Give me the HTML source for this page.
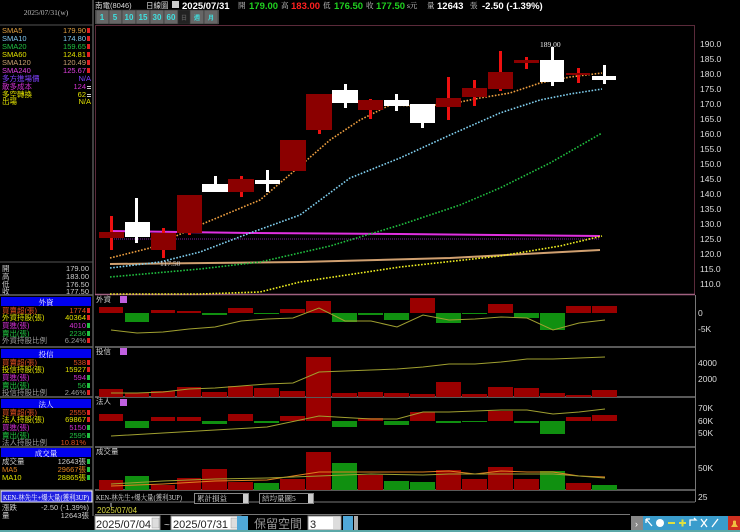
<!DOCTYPE html>
<html><head><meta charset="utf-8"><style>
html,body{margin:0;padding:0;background:#000;width:740px;height:532px;overflow:hidden}
svg{display:block}
text{font-family:"Liberation Sans","Noto Sans CJK TC",sans-serif}
.s{font-family:"Liberation Serif","Noto Serif CJK SC",serif;font-size:7.5px}
.ax{font-family:"DejaVu Sans","Liberation Sans",sans-serif;font-size:8.5px;fill:#ddd}
</style></head><body>
<svg width="740" height="532" viewBox="0 0 740 532" xmlns="http://www.w3.org/2000/svg">
<rect width="740" height="532" fill="#000"/>
<!-- left panel -->
<line x1="93" y1="0" x2="93" y2="516" stroke="#555" stroke-width="1.5"/>
<line x1="0" y1="25" x2="93" y2="25" stroke="#555"/>
<text class="s" x="46" y="15" fill="#bbb" text-anchor="middle">2025/07/31(w)</text>
<g class="s">
<text x="2" y="33" fill="#e0a040">SMA5</text><text x="86" y="33" fill="#e0a040" text-anchor="end">179.90</text>
<text x="2" y="41" fill="#80c8f0">SMA10</text><text x="86" y="41" fill="#80c8f0" text-anchor="end">174.80</text>
<text x="2" y="49" fill="#20c040">SMA20</text><text x="86" y="49" fill="#20c040" text-anchor="end">159.65</text>
<text x="2" y="57" fill="#e0e000">SMA60</text><text x="86" y="57" fill="#e0e000" text-anchor="end">124.81</text>
<text x="2" y="65" fill="#c8a070">SMA120</text><text x="86" y="65" fill="#c8a070" text-anchor="end">120.49</text>
<text x="2" y="73" fill="#e040e0">SMA240</text><text x="86" y="73" fill="#e040e0" text-anchor="end">125.67</text>
<text x="2" y="81" fill="#8040ff">多方進場價</text><text x="91" y="81" fill="#8040ff" text-anchor="end">N/A</text>
<text x="2" y="89" fill="#d030d0">散多成本</text><text x="86" y="89" fill="#d030d0" text-anchor="end">124</text>
<text x="2" y="97" fill="#e0e000">多空轉換</text><text x="86" y="97" fill="#e0e000" text-anchor="end">62</text>
<text x="2" y="104" fill="#e0e000">出場</text><text x="91" y="104" fill="#e0e000" text-anchor="end">N/A</text>
</g>
<g fill="#e02020"><rect x="87" y="28" width="3" height="5"/><rect x="87" y="36" width="3" height="5"/><rect x="87" y="44" width="3" height="5"/><rect x="87" y="52" width="3" height="5"/><rect x="87" y="60" width="3" height="5"/><rect x="87" y="68" width="3" height="5"/></g>
<g fill="#ccc"><rect x="87" y="86" width="4" height="1"/><rect x="87" y="88" width="4" height="1"/><rect x="87" y="94" width="4" height="1"/><rect x="87" y="96" width="4" height="1"/></g>
<line x1="0" y1="262" x2="93" y2="262" stroke="#555"/>
<g class="s" fill="#ccc">
<text x="2" y="271">開</text><text x="89" y="271" text-anchor="end">179.00</text>
<text x="2" y="279">高</text><text x="89" y="279" text-anchor="end">183.00</text>
<text x="2" y="287">低</text><text x="89" y="287" text-anchor="end">176.50</text>
<text x="2" y="294">收</text><text x="89" y="294" text-anchor="end">177.50</text>
</g>
<line x1="0" y1="295" x2="93" y2="295" stroke="#666" stroke-width="1.5"/>
<rect x="1" y="297" width="90" height="9" fill="#0000ee"/><text class="s" x="46" y="305" fill="#fff" text-anchor="middle">外資</text>
<g class="s">
<text x="2" y="313" fill="#e05020">買賣超(張)</text><text x="86" y="313" fill="#e05020" text-anchor="end">1774</text>
<text x="2" y="320" fill="#e0e000">外資持股(張)</text><text x="86" y="320" fill="#e0e000" text-anchor="end">40364</text>
<text x="2" y="328" fill="#d030d0">買進(張)</text><text x="86" y="328" fill="#d030d0" text-anchor="end">4010</text>
<text x="2" y="336" fill="#20c040">賣出(張)</text><text x="86" y="336" fill="#20c040" text-anchor="end">2236</text>
<text x="2" y="343" fill="#999">外資持股比例</text><text x="86" y="343" fill="#999" text-anchor="end">6.24%</text>
</g>
<line x1="0" y1="347" x2="93" y2="347" stroke="#666" stroke-width="1.5"/>
<rect x="1" y="349" width="90" height="9" fill="#0000ee"/><text class="s" x="46" y="357" fill="#fff" text-anchor="middle">投信</text>
<g class="s">
<text x="2" y="365" fill="#e05020">買賣超(張)</text><text x="86" y="365" fill="#e05020" text-anchor="end">538</text>
<text x="2" y="372" fill="#e0e000">投信持股(張)</text><text x="86" y="372" fill="#e0e000" text-anchor="end">15927</text>
<text x="2" y="380" fill="#d030d0">買進(張)</text><text x="86" y="380" fill="#d030d0" text-anchor="end">594</text>
<text x="2" y="388" fill="#20c040">賣出(張)</text><text x="86" y="388" fill="#20c040" text-anchor="end">56</text>
<text x="2" y="395" fill="#999">投信持股比例</text><text x="86" y="395" fill="#999" text-anchor="end">2.46%</text>
</g>
<line x1="0" y1="397" x2="93" y2="397" stroke="#666" stroke-width="1.5"/>
<rect x="1" y="399" width="90" height="9" fill="#0000ee"/><text class="s" x="46" y="407" fill="#fff" text-anchor="middle">法人</text>
<g class="s">
<text x="2" y="415" fill="#e05020">買賣超(張)</text><text x="86" y="415" fill="#e05020" text-anchor="end">2555</text>
<text x="2" y="422" fill="#e0e000">法人持股(張)</text><text x="86" y="422" fill="#e0e000" text-anchor="end">69867</text>
<text x="2" y="430" fill="#d030d0">買進(張)</text><text x="86" y="430" fill="#d030d0" text-anchor="end">5150</text>
<text x="2" y="438" fill="#20c040">賣出(張)</text><text x="86" y="438" fill="#20c040" text-anchor="end">2595</text>
<text x="2" y="445" fill="#999">法人持股比例</text><text x="86" y="445" fill="#e05020" text-anchor="end">10.81%</text>
</g>
<line x1="0" y1="447" x2="93" y2="447" stroke="#666" stroke-width="1.5"/>
<rect x="1" y="448" width="90" height="9" fill="#0000ee"/><text class="s" x="46" y="456" fill="#fff" text-anchor="middle">成交量</text>
<g class="s">
<text x="2" y="464" fill="#ccc">成交量</text><text x="86" y="464" fill="#ccc" text-anchor="end">12643張</text>
<text x="2" y="472" fill="#e08020">MA5</text><text x="86" y="472" fill="#e08020" text-anchor="end">29667張</text>
<text x="2" y="480" fill="#e0e000">MA10</text><text x="86" y="480" fill="#e0e000" text-anchor="end">28865張</text>
</g>
<g fill="#20c040"><rect x="87" y="459" width="3" height="5"/><rect x="87" y="467" width="3" height="5"/><rect x="87" y="475" width="3" height="5"/></g>
<g fill="#e02020"><rect x="87" y="308" width="3" height="5"/><rect x="87" y="315" width="3" height="5"/><rect x="87" y="338" width="3" height="5"/><rect x="87" y="360" width="3" height="5"/><rect x="87" y="367" width="3" height="5"/><rect x="87" y="390" width="3" height="5"/><rect x="87" y="410" width="3" height="5"/><rect x="87" y="417" width="3" height="5"/></g>
<g fill="#20c040"><rect x="87" y="323" width="3" height="5"/><rect x="87" y="331" width="3" height="5"/><rect x="87" y="375" width="3" height="5"/><rect x="87" y="383" width="3" height="5"/><rect x="87" y="425" width="3" height="5"/><rect x="87" y="433" width="3" height="5"/></g>
<line x1="0" y1="490" x2="93" y2="490" stroke="#666" stroke-width="1.5"/>
<rect x="1" y="491" width="91" height="11" fill="#2020e0" stroke="#fff" stroke-width="1"/><text class="s" x="3" y="500" fill="#fff" textLength="86" lengthAdjust="spacingAndGlyphs">KEN-林先生+爆大量(獲利3UP)</text>
<g class="s" fill="#ccc">
<text x="2" y="510">漲跌</text><text x="89" y="510" text-anchor="end">-2.50 (-1.39%)</text>
<text x="2" y="518">量</text><text x="89" y="518" text-anchor="end">12643張</text>
</g>

<!-- top header -->
<g class="s" font-size="8.5">
<text x="95" y="8" fill="#ddd">南電(8046)</text>
<text x="146" y="8" fill="#ddd">日線圖</text>
<rect x="172" y="1" width="7" height="7" fill="#ccc"/>
</g>
<text x="182" y="9" fill="#fff" font-size="9.5" font-weight="bold">2025/07/31</text>
<text class="s" x="238" y="8" fill="#ccc">開</text><text x="249" y="9" fill="#20d020" font-size="9.5" font-weight="bold">179.00</text>
<text class="s" x="281" y="8" fill="#ccc">高</text><text x="291" y="9" fill="#ff2020" font-size="9.5" font-weight="bold">183.00</text>
<text class="s" x="323" y="8" fill="#ccc">低</text><text x="334" y="9" fill="#20d020" font-size="9.5" font-weight="bold">176.50</text>
<text class="s" x="366" y="8" fill="#ccc">收</text><text x="376" y="9" fill="#20d020" font-size="9.5" font-weight="bold">177.50</text>
<text class="s" x="407" y="8" fill="#ccc">s元</text>
<text class="s" x="427" y="8" fill="#ccc">量</text><text x="437" y="9" fill="#fff" font-size="9.5" font-weight="bold">12643</text>
<text class="s" x="470" y="8" fill="#ccc">張</text><text x="482" y="9" fill="#fff" font-size="9.5" font-weight="bold">-2.50 (-1.39%)</text>
<rect x="95" y="10" width="124" height="14" fill="#555"/>
<g fill="#666" stroke="#333" stroke-width="0.6">
<rect x="96" y="10" width="13" height="14"/><rect x="109" y="10" width="13" height="14"/><rect x="122" y="10" width="14" height="14"/><rect x="136" y="10" width="14" height="14"/><rect x="150" y="10" width="14" height="14"/><rect x="164" y="10" width="14" height="14"/><rect x="178" y="10" width="12" height="14" fill="#222"/><rect x="190" y="10" width="14" height="14"/><rect x="204" y="10" width="14" height="14"/>
</g>
<g font-size="8" font-weight="bold" fill="#40e0e0" text-anchor="middle">
<text x="102" y="20">1</text><text x="115" y="20">5</text><text x="129" y="20">10</text><text x="143" y="20">15</text><text x="157" y="20">30</text><text x="171" y="20">60</text><text x="184" y="20" fill="#555" font-size="6">日</text><text x="197" y="20" font-size="6">週</text><text x="211" y="20" font-size="6">月</text>
</g>

<rect x="95.5" y="25.5" width="599" height="269" fill="none" stroke="#5a2a3a" stroke-width="1"/>
<line x1="95" y1="294.5" x2="695" y2="294.5" stroke="#a06080" stroke-width="1.5"/>
<g class="ax">
<text x="700" y="47">190.0</text><text x="700" y="62">185.0</text><text x="700" y="77">180.0</text><text x="700" y="92">175.0</text><text x="700" y="107">170.0</text><text x="700" y="122">165.0</text><text x="700" y="137">160.0</text><text x="700" y="152">155.0</text><text x="700" y="167">150.0</text><text x="700" y="182">145.0</text><text x="700" y="197">140.0</text><text x="700" y="212">135.0</text><text x="700" y="227">130.0</text><text x="700" y="242">125.0</text><text x="700" y="257">120.0</text><text x="700" y="272">115.0</text><text x="700" y="287">110.0</text>
</g>
<line x1="110" y1="239" x2="600" y2="239" stroke="#8020a0" stroke-width="1" stroke-dasharray="1 1"/>
<polyline points="110,264 300,262 450,258 600,250" fill="none" stroke="#d0a070" stroke-width="2"/>
<polyline points="110,231 250,233 400,234 600,236" fill="none" stroke="#e030e0" stroke-width="2"/>
<g fill="none" stroke-width="1.6" stroke-dasharray="1.6 1.6">
<polyline points="110,294 200,294 260,292 300,282 400,267 500,256 560,246 602,236" stroke="#f0f020"/>
<polyline points="110,277 200,269 260,262 330,246 400,225 460,205 500,188 550,163 602,133" stroke="#20c040"/>
<polyline points="110,268 160,262 200,252 250,233 300,215 350,178 400,158 450,135 500,113 540,100 570,94 602,89" stroke="#80d0f0"/>
<polyline points="110,258 150,248 200,225 260,200 300,166 330,140 360,120 390,105 420,106 450,104 480,98 510,93 540,83 570,77 602,73" stroke="#f0a040"/>
</g>
<text class="s" x="160" y="266" fill="#ccc">117.50</text>
<g stroke="none">
<rect x="110" y="216" width="3" height="34" fill="#ee1010"/><rect x="99" y="232" width="25" height="6" fill="#8b0000"/>
<rect x="135" y="198" width="3" height="45" fill="#fff"/><rect x="125" y="222" width="25" height="15" fill="#fff"/>
<rect x="162" y="228" width="3" height="30" fill="#ee1010"/><rect x="151" y="233" width="25" height="17" fill="#8b0000"/>
<rect x="188" y="195" width="3" height="40" fill="#ee1010"/><rect x="177" y="195" width="25" height="38" fill="#8b0000"/>
<rect x="214" y="176" width="3" height="14" fill="#fff"/><rect x="202" y="184" width="26" height="8" fill="#fff"/>
<rect x="240" y="176" width="3" height="21" fill="#ee1010"/><rect x="228" y="179" width="26" height="13" fill="#8b0000"/>
<rect x="266" y="170" width="3" height="22" fill="#fff"/><rect x="255" y="180" width="25" height="4" fill="#fff"/>
<rect x="280" y="140" width="26" height="31" fill="#8b0000"/>
<rect x="318" y="94" width="3" height="40" fill="#ee1010"/><rect x="306" y="94" width="26" height="36" fill="#8b0000"/>
<rect x="344" y="84" width="3" height="24" fill="#fff"/><rect x="332" y="90" width="26" height="13" fill="#fff"/>
<rect x="369" y="99" width="3" height="20" fill="#ee1010"/><rect x="358" y="100" width="25" height="10" fill="#8b0000"/>
<rect x="395" y="94" width="3" height="17" fill="#fff"/><rect x="384" y="100" width="25" height="6" fill="#fff"/>
<rect x="421" y="104" width="3" height="24" fill="#fff"/><rect x="410" y="104" width="25" height="19" fill="#fff"/>
<rect x="447" y="77" width="3" height="43" fill="#ee1010"/><rect x="436" y="98" width="25" height="9" fill="#8b0000"/>
<rect x="473" y="80" width="3" height="26" fill="#ee1010"/><rect x="462" y="88" width="25" height="9" fill="#8b0000"/>
<rect x="499" y="51" width="3" height="40" fill="#ee1010"/><rect x="488" y="72" width="25" height="17" fill="#8b0000"/>
<rect x="525" y="57" width="3" height="12" fill="#ee1010"/><rect x="514" y="60" width="25" height="3" fill="#8b0000"/>
<rect x="551" y="47" width="3" height="39" fill="#fff"/><rect x="540" y="60" width="24" height="22" fill="#fff"/>
<rect x="577" y="68" width="3" height="15" fill="#ee1010"/><rect x="566" y="73" width="24" height="2" fill="#8b0000"/>
<rect x="603" y="65" width="3" height="19" fill="#fff"/><rect x="592" y="76" width="24" height="4" fill="#fff"/>
</g>
<text class="s" x="540" y="47" fill="#eee" font-size="9">189.00</text>

<g stroke="#777" stroke-width="1.5">
<line x1="95" y1="347" x2="695" y2="347"/><line x1="95" y1="397" x2="695" y2="397"/><line x1="95" y1="447" x2="695" y2="447"/><line x1="95" y1="490" x2="695" y2="490"/>
</g>
<line x1="695.5" y1="295" x2="695.5" y2="502" stroke="#777"/>
<line x1="95" y1="502" x2="695" y2="502" stroke="#777"/>
<g class="s" fill="#ccc"><text x="96" y="302">外資</text><text x="96" y="354">投信</text><text x="96" y="404">法人</text><text x="96" y="454">成交量</text></g>
<g fill="#c060e0"><rect x="120" y="296" width="7" height="7"/><rect x="120" y="348" width="7" height="7"/><rect x="120" y="399" width="7" height="7"/></g>
<g class="ax" font-size="8"><text x="698" y="316">0</text><text x="698" y="332">-5K</text><text x="698" y="366">4000</text><text x="698" y="382">2000</text><text x="698" y="411">70K</text><text x="698" y="424">60K</text><text x="698" y="436">50K</text><text x="698" y="471">50K</text><text x="698" y="500">25</text></g>
<g>
<rect x="99" y="307" width="24" height="6" fill="#9b0000"/><rect x="125" y="313" width="24" height="9" fill="#109010"/><rect x="151" y="310" width="24" height="3" fill="#9b0000"/><rect x="177" y="311" width="24" height="2" fill="#9b0000"/><rect x="202" y="313" width="25" height="2" fill="#109010"/><rect x="228" y="308" width="25" height="5" fill="#9b0000"/><rect x="254" y="313" width="25" height="1" fill="#109010"/><rect x="280" y="309" width="25" height="4" fill="#9b0000"/><rect x="306" y="301" width="25" height="12" fill="#9b0000"/><rect x="332" y="313" width="25" height="9" fill="#109010"/><rect x="358" y="313" width="25" height="2" fill="#109010"/><rect x="384" y="313" width="25" height="7" fill="#109010"/><rect x="410" y="298" width="25" height="15" fill="#9b0000"/><rect x="436" y="313" width="25" height="10" fill="#109010"/><rect x="462" y="313" width="25" height="1" fill="#109010"/><rect x="488" y="304" width="25" height="9" fill="#9b0000"/><rect x="514" y="313" width="25" height="5" fill="#109010"/><rect x="540" y="313" width="25" height="17" fill="#109010"/><rect x="566" y="306" width="25" height="7" fill="#9b0000"/><rect x="592" y="306" width="25" height="7" fill="#9b0000"/>
</g>
<polyline points="111,330 137,333 163,332 189,329 215,327 241,321 267,319 293,318 319,308 345,321 371,321 397,327 423,315 449,320 475,319 501,317 527,318 553,330 579,323 605,320" fill="none" stroke="#a0a030" stroke-width="1"/>
<g fill="#9b0000">
<rect x="99" y="389" width="24" height="8"/><rect x="125" y="393" width="24" height="4"/><rect x="151" y="391" width="24" height="6"/><rect x="177" y="387" width="24" height="10"/><rect x="202" y="392" width="25" height="5"/><rect x="228" y="386" width="25" height="11"/><rect x="254" y="388" width="25" height="9"/><rect x="280" y="391" width="25" height="6"/><rect x="306" y="357" width="25" height="40"/><rect x="332" y="393" width="25" height="4"/><rect x="358" y="392" width="25" height="5"/><rect x="384" y="393" width="25" height="4"/><rect x="410" y="394" width="25" height="3"/><rect x="436" y="382" width="25" height="15"/><rect x="462" y="394" width="25" height="3"/><rect x="488" y="387" width="25" height="10"/><rect x="514" y="388" width="25" height="9"/><rect x="540" y="393" width="25" height="4"/><rect x="566" y="395" width="25" height="2"/><rect x="592" y="390" width="25" height="7"/>
</g>
<polyline points="111,393 137,393 163,392 189,389 215,388 241,386 267,384 293,383 319,372 345,371 371,370 397,369 423,367 449,364 475,364 501,362 527,359 553,359 579,358 605,357" fill="none" stroke="#a0a030" stroke-width="1"/>
<g>
<rect x="99" y="414" width="24" height="7" fill="#9b0000"/><rect x="125" y="421" width="24" height="7" fill="#109010"/><rect x="151" y="417" width="24" height="4" fill="#9b0000"/><rect x="177" y="417" width="24" height="4" fill="#9b0000"/><rect x="202" y="421" width="25" height="3" fill="#109010"/><rect x="228" y="414" width="25" height="7" fill="#9b0000"/><rect x="254" y="421" width="25" height="2" fill="#109010"/><rect x="280" y="416" width="25" height="5" fill="#9b0000"/><rect x="306" y="398" width="25" height="23" fill="#9b0000"/><rect x="332" y="421" width="25" height="6" fill="#109010"/><rect x="358" y="418" width="25" height="3" fill="#9b0000"/><rect x="384" y="421" width="25" height="4" fill="#109010"/><rect x="410" y="412" width="25" height="9" fill="#9b0000"/><rect x="436" y="421" width="25" height="2" fill="#109010"/><rect x="462" y="421" width="25" height="1" fill="#109010"/><rect x="488" y="411" width="25" height="10" fill="#9b0000"/><rect x="514" y="421" width="25" height="2" fill="#109010"/><rect x="540" y="421" width="25" height="13" fill="#109010"/><rect x="566" y="417" width="25" height="4" fill="#9b0000"/><rect x="592" y="415" width="25" height="6" fill="#9b0000"/>
</g>
<polyline points="111,436 163,433 215,430 267,427 319,416 371,419 397,419 423,412 449,412 475,411 501,410 527,410 553,414 579,412 605,409" fill="none" stroke="#a0a030" stroke-width="1"/>
<g>
<rect x="99" y="480" width="24" height="10" fill="#9b0000"/><rect x="125" y="476" width="24" height="14" fill="#109010"/><rect x="151" y="485" width="24" height="5" fill="#9b0000"/><rect x="177" y="478" width="24" height="12" fill="#9b0000"/><rect x="202" y="469" width="25" height="21" fill="#9b0000"/><rect x="228" y="482" width="25" height="8" fill="#9b0000"/><rect x="254" y="483" width="25" height="7" fill="#109010"/><rect x="280" y="479" width="25" height="11" fill="#9b0000"/><rect x="306" y="452" width="25" height="38" fill="#9b0000"/><rect x="332" y="463" width="25" height="27" fill="#109010"/><rect x="358" y="475" width="25" height="15" fill="#9b0000"/><rect x="384" y="481" width="25" height="9" fill="#109010"/><rect x="410" y="482" width="25" height="8" fill="#109010"/><rect x="436" y="470" width="25" height="20" fill="#9b0000"/><rect x="462" y="479" width="25" height="11" fill="#9b0000"/><rect x="488" y="467" width="25" height="23" fill="#9b0000"/><rect x="514" y="479" width="25" height="11" fill="#9b0000"/><rect x="540" y="471" width="25" height="19" fill="#109010"/><rect x="566" y="483" width="25" height="7" fill="#9b0000"/><rect x="592" y="485" width="25" height="5" fill="#109010"/>
</g>
<polyline points="111,486 163,484 215,481 267,480 319,472 371,472 423,472 449,471 475,474 501,471 527,472 553,472 579,476 605,477" fill="none" stroke="#e08020" stroke-width="1"/>
<polyline points="111,484 163,481 215,479 267,478 319,476 371,474 423,475 449,474 475,474 501,474 527,474 553,474 579,476 605,478" fill="none" stroke="#a0a030" stroke-width="1"/>

<text class="s" x="96" y="500" fill="#ddd" textLength="86" lengthAdjust="spacingAndGlyphs">KEN-林先生+爆大量(獲利3UP)</text>
<rect x="194.5" y="493.5" width="54" height="10" fill="#000" stroke="#888"/><text class="s" x="197" y="501" fill="#ddd">累計損益</text><rect x="243" y="494" width="5" height="9" fill="#ccc"/>
<rect x="259.5" y="493.5" width="54" height="10" fill="#000" stroke="#888"/><text class="s" x="262" y="501" fill="#ddd">結均量圖5</text><rect x="308" y="494" width="5" height="9" fill="#ccc"/>
<line x1="111" y1="503" x2="111" y2="507" stroke="#ccc"/>
<text x="97" y="513" fill="#d8d840" font-size="8">2025/07/04</text>
<line x1="95" y1="514.5" x2="630" y2="514.5" stroke="#777"/>
<rect x="95" y="516" width="65" height="14" fill="#fff" stroke="#888"/><text x="96" y="528" fill="#222" font-size="11" font-family="Liberation Serif">2025/07/04</text><rect x="152" y="518" width="7" height="10" fill="#ddd" stroke="#999" stroke-width="0.5"/>
<text x="164" y="528" fill="#ccc" font-size="10">~</text>
<rect x="171" y="516" width="70" height="14" fill="#fff" stroke="#888"/><text x="173" y="528" fill="#222" font-size="11" font-family="Liberation Serif">2025/07/31</text><rect x="231" y="518" width="7" height="10" fill="#ddd" stroke="#999" stroke-width="0.5"/>
<rect x="237" y="516" width="11" height="14" fill="#50a8d8"/>
<text x="254" y="528" fill="#999" font-size="12" font-family="Noto Sans CJK TC,sans-serif">保留空間</text>
<rect x="308" y="516" width="33" height="14" fill="#fff" stroke="#888"/><text x="310" y="528" fill="#222" font-size="11" font-family="Liberation Serif">3</text><rect x="333" y="517" width="7" height="12" fill="#ddd"/>
<rect x="343" y="516" width="10" height="14" fill="#50a8d8"/><rect x="354" y="516" width="4" height="14" fill="#aaa"/>
<rect x="631" y="516" width="12" height="14" fill="#888"/><text x="635" y="527" fill="#fff" font-size="9">›</text>
<rect x="643" y="516" width="97" height="14" fill="#3a9ccc"/>
<g stroke="#fff" stroke-width="1.3" fill="none">
<path d="M646 519 L652 526 M646 519 L646 523 M646 519 L650 519"/>
<circle cx="660" cy="523" r="4" fill="#fff" stroke="none"/>
<path d="M668 523 H675" stroke="#e0e040" stroke-width="2"/>
<path d="M679 523 H686 M682.5 519.5 V526.5" stroke="#e0e040" stroke-width="2"/>
<path d="M690 526 V520 H696 L694 518"/>
<path d="M701 519 L707 527 M707 519 L701 527"/>
<path d="M712 527 L718 519"/>
</g>
<rect x="728" y="516" width="12" height="14" fill="#d03020"/><path d="M731 527 H738 L736 524 V521 A2.5 2.5 0 0 0 733 521 V524 Z" fill="#f0c040"/>
<rect x="0" y="530" width="740" height="2" fill="#5aa8a8"/>
</svg>
</body></html>
